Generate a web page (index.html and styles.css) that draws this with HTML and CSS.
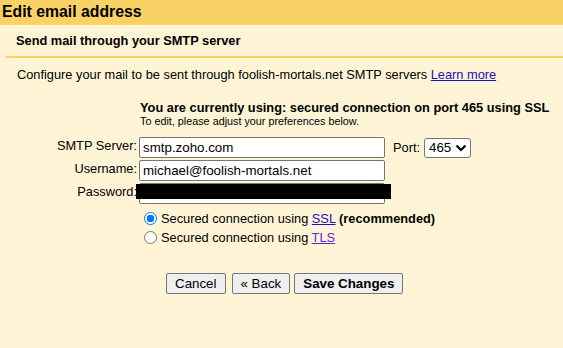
FILE: index.html
```html
<!DOCTYPE html>
<html>
<head>
<meta charset="utf-8">
<link rel="stylesheet" href="styles.css">
</head>
<body>
<div class="header">Edit email address</div>
<div class="sub">Send mail through your SMTP server</div>
<div class="rule"></div>
<p class="intro">Configure your mail to be sent through foolish-mortals.net SMTP servers <a href="#">Learn more</a></p>
<div class="form">
  <div class="status">
    <div class="status-main">You are currently using: secured connection on port 465 using SSL</div>
    <div class="status-note">To edit, please adjust your preferences below.</div>
  </div>
  <div class="grid">
    <label class="lbl">SMTP Server:</label>
    <div class="field">
      <input class="text" type="text" value="smtp.zoho.com">
      <span class="port">Port:</span>
      <span class="select">465<svg width="12" height="8" viewBox="0 0 12 8"><path d="M1.5 1.5 L6 6 L10.5 1.5" fill="none" stroke="#000" stroke-width="2.2"/></svg></span>
    </div>
    <label class="lbl">Username:</label>
    <div class="field">
      <input class="text" type="text" value="michael@foolish-mortals.net">
    </div>
    <label class="lbl">Password:</label>
    <div class="field pw">
      <input class="text" type="text" value="">
      <div class="redact"></div>
    </div>
  </div>
  <div class="radios">
    <div class="radio-row"><span class="radio on"></span><span>Secured connection using <a href="#">SSL</a> <b>(recommended)</b></span></div>
    <div class="radio-row"><span class="radio"></span><span>Secured connection using <a href="#" class="visited">TLS</a></span></div>
  </div>
  <div class="buttons">
    <button class="btn">Cancel</button>
    <button class="btn back">« Back</button>
    <button class="btn bold">Save Changes</button>
  </div>
</div>
</body>
</html>
```
FILE: styles.css
```css
html, body {
  margin: 0;
  padding: 0;
  background: #fff5d6;
  font-family: "Liberation Sans", Arial, sans-serif;
  font-size: 12.8px;
  color: #000;
  height: 100%;
}
a { color: #1a0dcc; text-decoration: underline; }
a.visited { color: #5a2ad0; }
.header {
  background: #fad165;
  height: 25px;
  line-height: 24px;
  padding-left: 2px;
  font-weight: bold;
  font-size: 15.8px;
}
.sub {
  font-weight: bold;
  padding: 8px 0 0 16px;
  height: 23px;
  line-height: 15px;
}
.rule {
  margin-left: 6px;
  height: 2px;
  background: #fad165;
}
.intro {
  margin: 0;
  padding: 9px 0 0 17px;
  line-height: 15px;
}
.form {
  padding-top: 18px;
}
.status {
  margin-left: 140px;
}
.status-main {
  font-weight: bold;
  line-height: 15px;
}
.status-note {
  font-size: 10.8px;
  line-height: 12px;
}
.grid {
  margin-top: 10px;
  display: grid;
  grid-template-columns: 137px auto;
  row-gap: 2px;
  align-items: start;
}
.lbl {
  text-align: right;
  line-height: 15px;
  padding-top: 1px;
}
.field {
  display: flex;
  align-items: center;
  padding-left: 2px;
}
.pw { position: relative; }
.text {
  box-sizing: border-box;
  width: 246px;
  height: 21px;
  margin: 0;
  border: 1px solid #767676;
  border-radius: 2px;
  background: #fff;
  font-family: "Liberation Sans", Arial, sans-serif;
  font-size: 13.33px;
  padding: 0 3px;
  color: #000;
}
.port {
  margin-left: 8px;
}
.select {
  box-sizing: border-box;
  margin-left: 4px;
  width: 47px;
  height: 20px;
  border: 1px solid #767676;
  border-radius: 3px;
  background: #fff;
  display: flex;
  align-items: center;
  justify-content: space-between;
  padding: 0 3px 0 4px;
  font-size: 13.33px;
}
.redact {
  position: absolute;
  left: -1px;
  top: 1px;
  width: 255px;
  height: 15px;
  background: #000;
}
.radios {
  margin-top: 5px;
  margin-left: 144px;
}
.radio-row {
  display: flex;
  align-items: center;
  height: 19px;
}
.radio-row b { font-weight: bold; }
.radio {
  box-sizing: border-box;
  width: 13px;
  height: 13px;
  border: 1px solid #767676;
  border-radius: 50%;
  background: #fff;
  margin-right: 4px;
}
.radio.on {
  border: 1px solid #0075ff;
  background: radial-gradient(circle, #0075ff 0 3.5px, #fff 4px);
}
.buttons {
  margin-top: 26px;
  margin-left: 166px;
  display: flex;
  gap: 4px;
}
.btn {
  box-sizing: border-box;
  height: 21px;
  margin: 0;
  border: 1px solid #767676;
  border-radius: 2px;
  background: #efefef;
  font-family: "Liberation Sans", Arial, sans-serif;
  font-size: 13.33px;
  padding: 0 8px;
  color: #000;
}
.btn.back { margin-left: 2px; }
.btn.bold { font-weight: bold; }
```
